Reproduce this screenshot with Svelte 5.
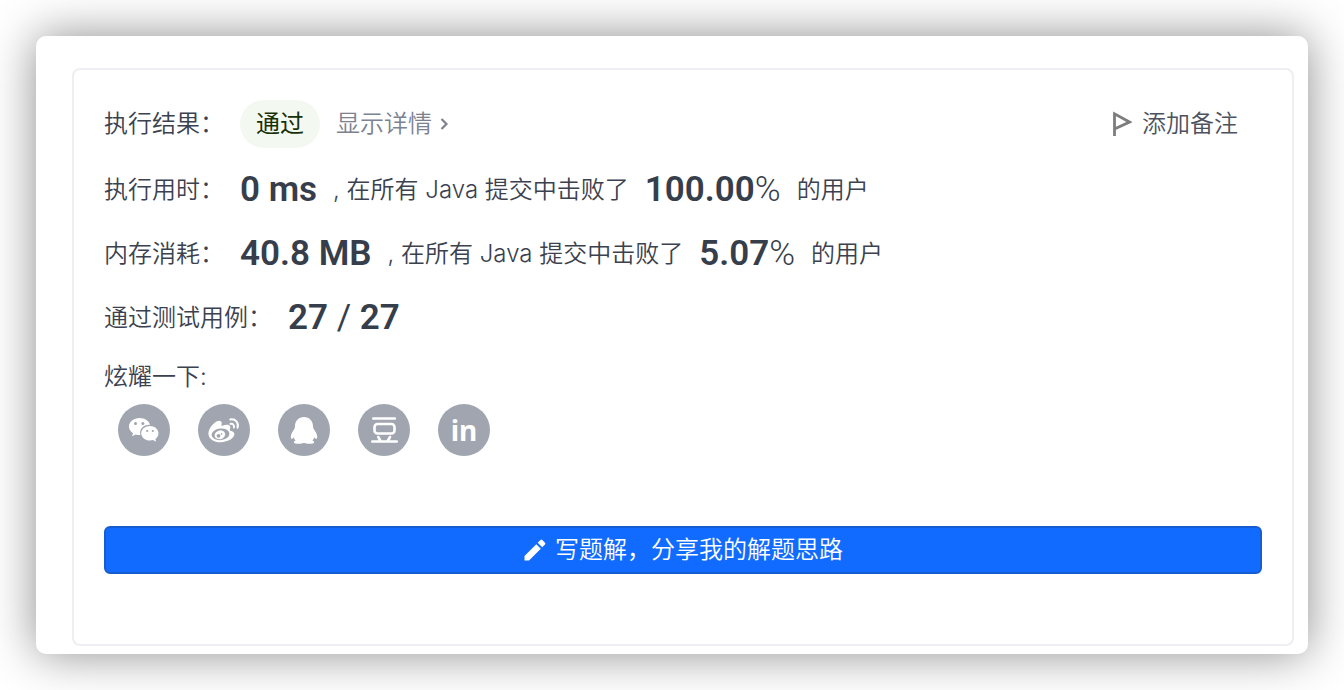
<script>
  const stats = [
    { label: '执行用时：', value: '0 ms', percent: '100.00' },
    { label: '内存消耗：', value: '40.8 MB', percent: '5.07' },
  ];
</script>

<main class="window">
  <section class="result">
    <div class="row head">
      <span>执行结果：</span>
      <span class="status">通过</span>
      <a class="detail" href="#detail">
        显示详情
        <svg width="8" height="12" viewBox="0 0 8 12">
          <path d="M1.5 1 6.5 6l-5 5" fill="none" stroke="currentColor" stroke-width="2.2" />
        </svg>
      </a>
      <button class="note">
        <svg width="20" height="26" viewBox="0 0 20 26">
          <path d="M2.5 25V2.8L17.5 11 2.5 18" fill="none" stroke="#7d7d7d" stroke-width="2.8" />
        </svg>
        添加备注
      </button>
    </div>

    {#each stats as { label, value, percent }}
      <div class="row">
        <span>{label}</span>
        <strong>{value}</strong>
        <span>, 在所有 Java 提交中击败了</span>
        <strong>{percent}<span class="thin">%</span></strong>
        <span>的用户</span>
      </div>
    {/each}

    <div class="row">
      <span>通过测试用例：</span>
      <strong>27 <span class="slash">/</span> 27</strong>
    </div>

    <div class="row brag">炫耀一下:</div>

    <div class="share">
      <a href="#wechat" aria-label="微信">
        <svg viewBox="0 0 52 52">
          <path
            fill="#fff"
            d="M21.5 14C15.6 14 11 17.8 11 22.6c0 2.8 1.5 5.1 4 6.7l-1 3 3.8-1.9c1.3.4 2.4.5 3.7.5h.9a8 8 0 0 1-.3-2.1c0-4.6 4.2-8 9.2-8h.8C31.1 16.9 26.7 14 21.5 14z"
          />
          <path
            fill="#fff"
            d="M40.5 29.2c0-4-4-7.2-8.6-7.2s-8.7 3.2-8.7 7.2 3.9 7.3 8.7 7.3c1 0 2-.2 3-.5l3.2 1.7-.8-2.7c2-1.4 3.2-3.4 3.2-5.8z"
          />
          <g fill="#a1a5b0">
            <circle cx="17.5" cy="19.6" r="1.5" />
            <circle cx="24.9" cy="19.6" r="1.5" />
            <circle cx="29.2" cy="27" r="1.1" />
            <circle cx="34.8" cy="27" r="1.1" />
          </g>
        </svg>
      </a>
      <a href="#weibo" aria-label="微博">
        <svg viewBox="0 0 52 52">
          <path
            fill="#fff"
            d="M32.6 26.8c-.7-.2-1-.5-.7-1.2.6-1.5.6-2.8 0-3.7-1.2-1.7-4.5-1.5-7.7-.2-1 .4-1-.2-.7-1 .5-1.5.3-2.7-.5-3.3-2-1.6-5.4.3-8.4 3.3-2.5 2.5-4.2 5.7-4.2 8.7 0 5.4 5.8 8.8 12 8.8 8.3 0 14-4.5 14-8.1 0-1.7-1.5-2.8-3.8-3.3z"
          />
          <ellipse cx="22.5" cy="30.3" rx="9" ry="5.8" fill="#a1a5b0" transform="rotate(-6 22.5 30.3)" />
          <ellipse cx="21.9" cy="30.8" rx="5.4" ry="4.3" fill="#fff" transform="rotate(-18 21.9 30.8)" />
          <circle cx="20.5" cy="31.8" r="1.9" fill="#a1a5b0" />
          <circle cx="23.5" cy="29.9" r=".8" fill="#a1a5b0" />
          <path
            d="M32.2 15.4c5.2-1 9 3.3 7.3 8.4M32.5 19.8c2.3-.4 4.1 1.4 3.4 3.7"
            fill="none"
            stroke="#fff"
            stroke-width="2"
            stroke-linecap="round"
          />
        </svg>
      </a>
      <a href="#qq" aria-label="QQ">
        <svg viewBox="0 0 52 52">
          <path
            fill="#fff"
            d="M26 13c-5.4 0-9 4-9 9 0 1.2-.2 2-.7 2.9-2 2.700-3.500 5.300-3.500 7.900 0 1.300.4 2.100.9 2.100.8 0 1.500-.9 1.900-1.600.3 1.300 1 2.400 2 3.300-1.100.4-1.700 1-1.700 1.700 0 1.200 2 1.500 4.700 1.500 2.300 0 4-.4 5.400-1 1.400.6 3.100 1 5.400 1 2.700 0 4.700-.3 4.700-1.500 0-.7-.6-1.300-1.700-1.700 1-.9 1.700-2 2-3.300.4.7 1.100 1.600 1.900 1.600.5 0 .9-.8.9-2.100 0-2.600-1.500-5.200-3.500-7.900-.5-.9-.7-1.700-.7-2.900 0-5-3.600-9-9-9z"
          />
        </svg>
      </a>
      <a href="#douban" aria-label="豆瓣">
        <svg viewBox="0 0 52 52">
          <g fill="none" stroke="#fff" stroke-width="2.6" stroke-linecap="round" stroke-linejoin="round">
            <path d="M15.3 14.5h21.5M14.3 37.5h24.500" />
            <rect x="16.5" y="20" width="20" height="9.5" rx="3" />
            <path d="m20.3 33 2.200 4M32 33l-2.200 4" />
          </g>
        </svg>
      </a>
      <a class="linkedin" href="#linkedin" aria-label="LinkedIn">in</a>
    </div>

    <button class="write">
      <svg width="24" height="24" viewBox="0 0 24 24">
        <path
          fill="currentColor"
          d="M1.500 18v4.500H6L17.800 10.700l-4.500-4.500L1.500 18zM22 6.500a1.300 1.300 0 0 0 0-1.800L19.300 2a1.300 1.300 0 0 0-1.800 0l-2.800 2.800 4.500 4.500L22 6.500z"
        />
      </svg>
      写题解，分享我的解题思路
    </button>
  </section>
</main>

<style>
  :global(body) {
    background: #fff;
  }
  .window {
    margin: 36px;
    padding: 32px 14px 8px 36px;
    border-radius: 10px;
    background: #fff;
    box-shadow: 0 0 48px rgba(0, 0, 0, 0.45);
    font-family: Inter, 'Noto Sans CJK SC', sans-serif;
    font-size: 24px;
    font-weight: 350;
    line-height: 32px;
    color: #3b414e;
  }
  .result {
    padding: 30px 30px 70px;
    border: 2px solid #eeeef3;
    border-radius: 8px;
  }
  .row {
    display: flex;
    align-items: center;
    height: 64px;
    gap: 16px;
    white-space: nowrap;
  }
  .row.head {
    height: 48px;
    margin-bottom: 10px;
  }
  .status {
    padding: 0 16px;
    border-radius: 24px;
    background: #f3f9f0;
    color: #173006;
    font-weight: 400;
    line-height: 48px;
  }
  a {
    text-decoration: none;
  }
  .detail {
    display: flex;
    align-items: center;
    gap: 8px;
    color: #7c828f;
  }
  button {
    display: flex;
    align-items: center;
    font: inherit;
    cursor: pointer;
  }
  .note {
    gap: 10px;
    margin-left: auto;
    margin-right: 24px;
    padding: 0;
    border: none;
    background: none;
    color: #4c525e;
  }
  strong {
    font-family: Roboto, sans-serif;
    font-size: 35px;
    font-weight: 600;
    color: #373e4b;
  }
  .thin {
    font-weight: 300;
  }
  .slash {
    font-weight: 400;
  }
  .row.brag {
    height: 54px;
  }
  .share {
    display: flex;
    gap: 28px;
    margin: 0 14px 70px;
  }
  .share a {
    width: 52px;
    height: 52px;
    border-radius: 50%;
    background: #a1a5b0;
  }
  .share svg {
    display: block;
  }
  .share .linkedin {
    color: #fff;
    font: 700 28px/52px 'Noto Sans', sans-serif;
    text-align: center;
  }
  .write {
    justify-content: center;
    gap: 8px;
    width: 100%;
    height: 48px;
    border: 2px solid #175cd0;
    border-radius: 6px;
    background: #126bff;
    color: #fff;
  }
</style>
